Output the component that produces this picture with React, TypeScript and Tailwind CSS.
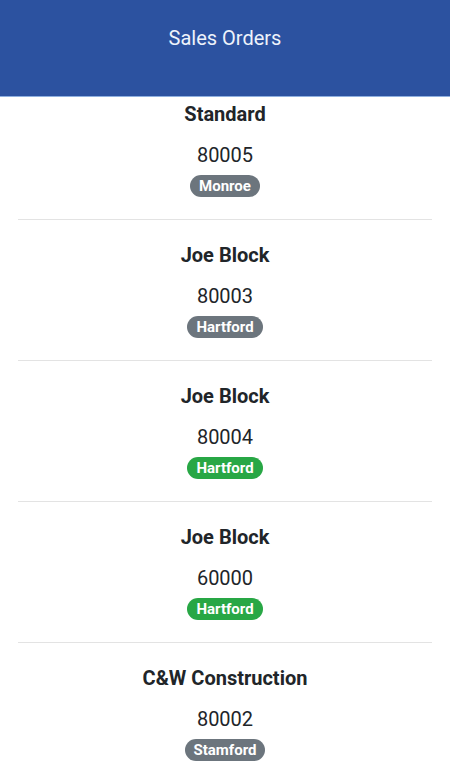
const orders = [
  { name: 'Standard', number: '80005', branch: 'Monroe', done: false },
  { name: 'Joe Block', number: '80003', branch: 'Hartford', done: false },
  { name: 'Joe Block', number: '80004', branch: 'Hartford', done: true },
  { name: 'Joe Block', number: '60000', branch: 'Hartford', done: true },
  { name: 'C&W Construction', number: '80002', branch: 'Stamford', done: false },
];

export default function App() {
  return (
    <div className="min-h-screen bg-white text-[#212529]" style={{ fontFamily: 'Roboto, "Noto Sans", sans-serif' }}>
      {/* Header */}
      <header className="h-[97px] bg-[#2c52a0] border-b border-[#8fb0e0] flex justify-center pt-[25px]">
        <h1 className="text-[20px] leading-[26px] text-[#eef3fb]">Sales Orders</h1>
      </header>

      <ul className="px-[18px]">
        {orders.map((o, i) => (
          <OrderRow key={i} {...o} first={i === 0} />
        ))}
      </ul>
    </div>
  );
}

function OrderRow({ name, number, branch, done, first }: { name: string; number: string; branch: string; done: boolean; first: boolean }) {
  return (
    <li className={`flex flex-col items-center border-b border-[#e3e3e3] pb-[22px] ${first ? 'pt-[5px]' : 'pt-[23px]'}`}>
      <div className="text-[20px] leading-[24px] font-bold">{name}</div>
      <div className="mt-[17px] text-[20px] leading-[24px]">{number}</div>
      <span
        className={`mt-[8px] h-[22px] px-[9px] rounded-full text-white text-[15px] font-bold leading-[22px] ${done ? 'bg-[#28a745]' : 'bg-[#6c757d]'}`}
      >
        {branch}
      </span>
    </li>
  );
}
